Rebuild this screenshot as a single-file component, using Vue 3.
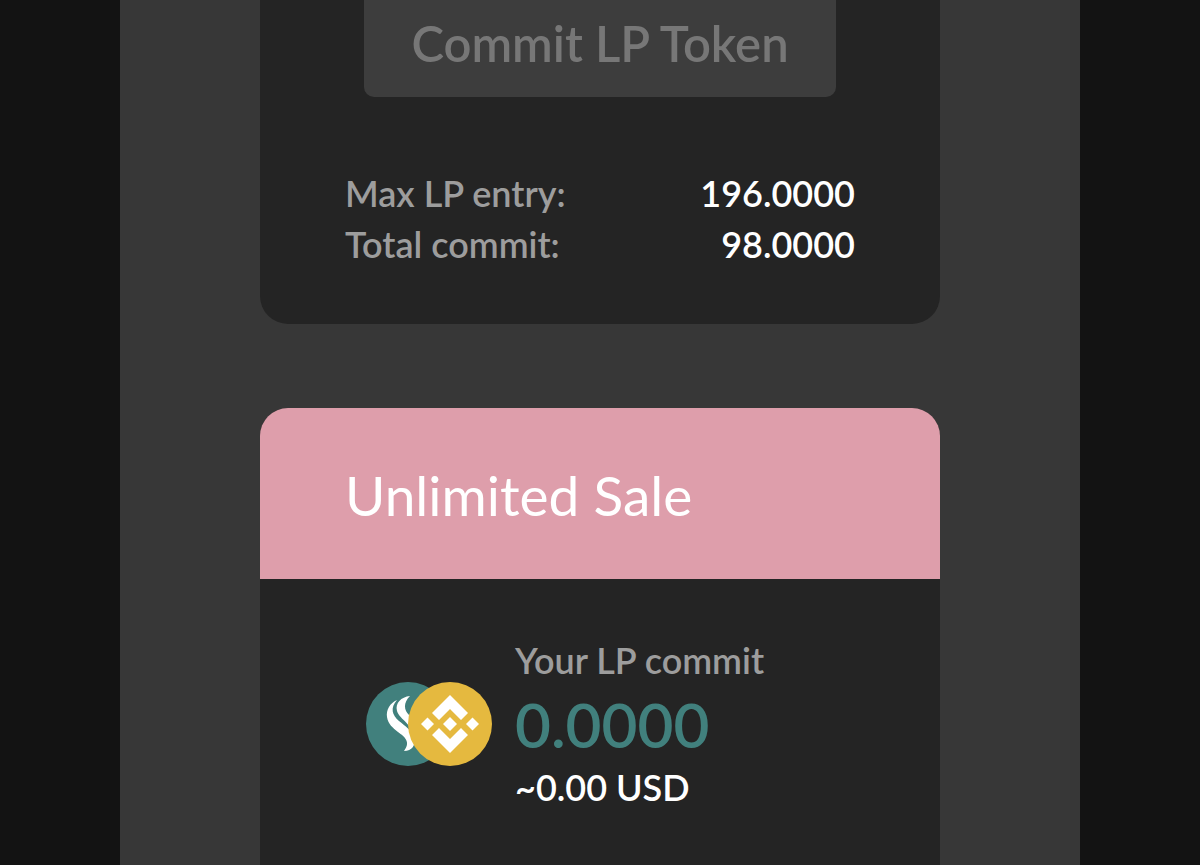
<script setup>
const totals = [
  { label: 'Max LP entry:', value: '196.0000' },
  { label: 'Total commit:', value: '98.0000' },
]
</script>

<template>
  <main class="page">
    <section class="card card-first">
      <button class="commit" type="button" disabled>Commit LP Token</button>
      <dl class="totals">
        <div v-for="row in totals" :key="row.label" class="row">
          <dt>{{ row.label }}</dt>
          <dd>{{ row.value }}</dd>
        </div>
      </dl>
    </section>

    <section class="card card-sale">
      <header class="head">
        <h2>Unlimited Sale</h2>
      </header>
      <div class="body">
        <svg class="tokens" viewBox="0 0 126 84" aria-hidden="true">
          <circle cx="42" cy="42" r="42" fill="#41807d" />
          <g fill="#fff">
            <path d="M31 18C24 21 20 28 21 35C22 42 27 46 32 50C39 55 45 60 38 69C46 69 50 63 48 56C46 48 39 44 33 39C26 33 24 26 31 18Z" />
            <path d="M44 14C35 15 29 21 31 29C34 38 47 42 47 55C53 46 49 39 43 33C38 28 37 21 44 14Z" />
          </g>
          <circle cx="84" cy="42" r="42" fill="#e5b93f" />
          <g fill="#fff">
            <path d="M84 13L102 31L95 38L84 27L73 38L66 31Z" />
            <path d="M84 71L102 53L95 46L84 57L73 46L66 53Z" />
            <path d="M84 35L91 42L84 49L77 42Z" />
            <path d="M61.500 35.500L68 42L61.500 48.500L55 42Z" />
            <path d="M106.500 35.500L113 42L106.500 48.500L100 42Z" />
          </g>
        </svg>
        <div class="amounts">
          <p class="label">Your LP commit</p>
          <p class="amount">0.0000</p>
          <p class="usd">~0.00 USD</p>
        </div>
      </div>
    </section>
  </main>
</template>

<style>
body {
  margin: 0;
  background: #131313;
}
</style>

<style scoped>
.page {
  box-sizing: border-box;
  display: flex;
  flex-direction: column;
  gap: 84px;
  width: 80%;
  min-height: 100vh;
  margin: 0 auto;
  padding: 0 140px;
  background: #373737;
  color: #fff;
  font-family: Lato, "Open Sans", sans-serif;
  font-size: 36px;
  font-weight: 600;
  line-height: 51px;
}
.card {
  background: #242424;
}
.card-first {
  display: flex;
  flex-direction: column;
  gap: 71px;
  padding: 0 85px 54px;
  border-radius: 0 0 28px 28px;
}
.commit {
  align-self: center;
  padding: 12px 47px 22px;
  border: 0;
  border-radius: 0 0 10px 10px;
  background: #3d3d3d;
  color: #777;
  font: inherit;
  font-size: 49px;
  line-height: 63px;
}
.totals {
  margin: 0;
}
.row {
  display: flex;
  justify-content: space-between;
}
dt,
.label {
  color: #9d9d9d;
}
dd {
  margin: 0;
}
.card-sale {
  flex: 1;
  border-radius: 28px 28px 0 0;
  overflow: hidden;
}
.head {
  padding: 52px 85px 48px;
  background: #de9eab;
}
h2 {
  margin: 0;
  font-size: 55px;
  font-weight: 400;
  line-height: 71px;
}
.body {
  display: flex;
  align-items: center;
  gap: 23px;
  padding: 56px 106px 48px;
}
.tokens {
  width: 126px;
  height: 84px;
  flex: none;
}
p {
  margin: 0;
}
.amount {
  color: #41807d;
  font-size: 62px;
  line-height: 76px;
}
</style>
